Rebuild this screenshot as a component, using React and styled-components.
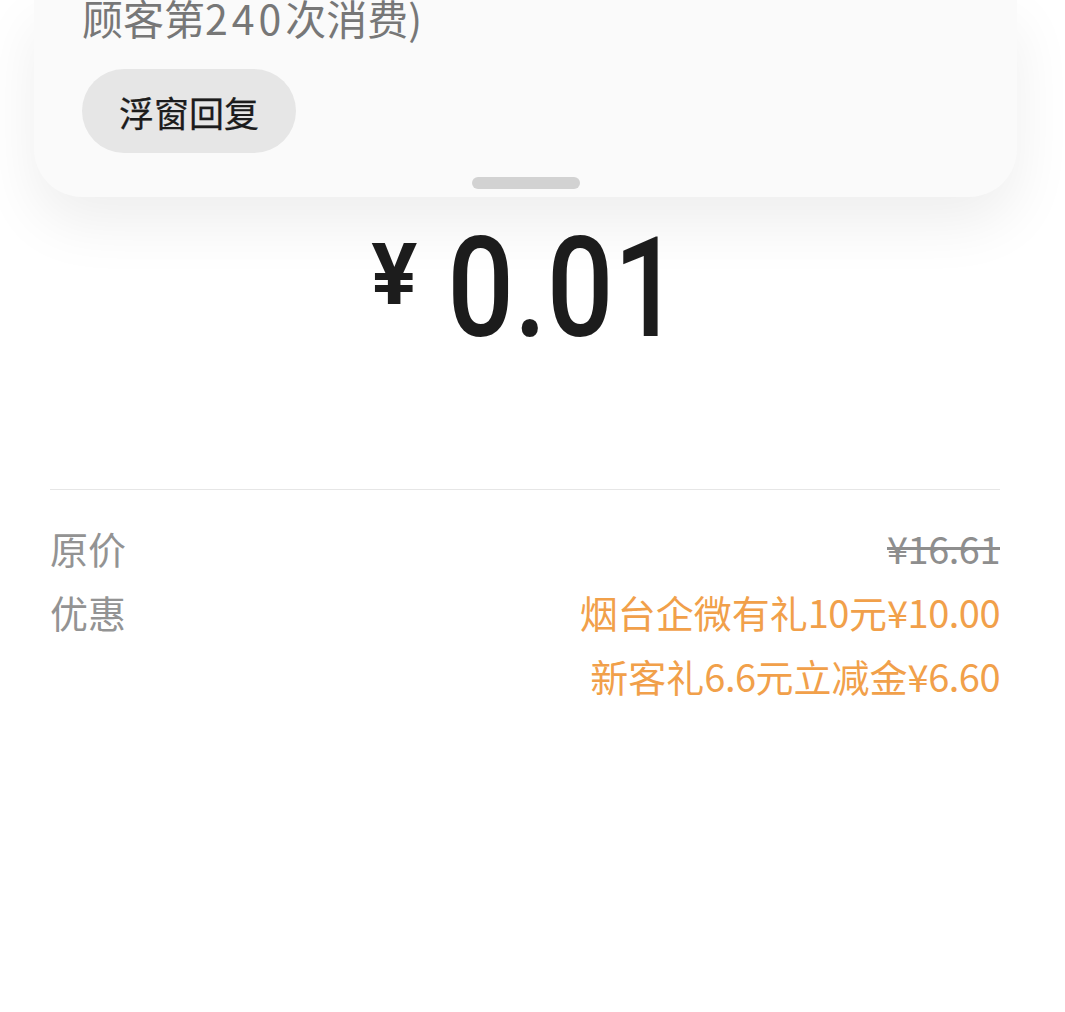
import React from "react";
import styled, {createGlobalStyle} from "styled-components";

const GlobalStyle = createGlobalStyle`
body {
    margin: 0;
    background: #fff;
    font-family: "Noto Sans CJK SC", "Noto Sans", sans-serif;
    overflow: hidden;
}
`;

const Page = styled.div`
width: 1065px;
height: 1012px;
display: flex;
flex-direction: column;
`;

const Card = styled.div`
display: flex;
flex-direction: column;
margin: 0 48px 0 34px;
padding: 0 48px 8px;
background: #fafafa;
border-radius: 0 0 48px 48px;
box-shadow: 0 26px 60px rgba(0, 0, 0, 0.07);
`;

const Note = styled.div`
margin-top: -7px;
font-size: 41px;
line-height: 48px;
color: #777;
`;

const Wide = styled.span`
letter-spacing: 4px;
`;

const ReplyButton = styled.button`
align-self: flex-start;
margin-top: 28px;
height: 84px;
padding: 0 37px;
border: none;
border-radius: 42px;
background: #e6e6e6;
color: #1c1c1c;
font-family: inherit;
font-size: 35px;
font-weight: 400;
-webkit-text-stroke: 0.25px #1c1c1c;
`;

const Handle = styled.div`
align-self: center;
margin-top: 24px;
width: 108px;
height: 12px;
border-radius: 6px;
background: #d2d2d2;
`;

const Price = styled.div`
display: flex;
justify-content: center;
align-items: flex-start;
margin: 21px 65px 0 50px;
color: #1c1c1c;
font-family: Roboto, "Noto Sans", sans-serif;
`;

const Yen = styled.span`
margin: 14px 6px 0 0;
font-size: 86px;
font-weight: 700;
line-height: 1;
`;

const Amount = styled.span`
display: inline-block;
margin-left: 2px;
margin-right: -24px;
font-size: 140px;
font-weight: 500;
line-height: 1;
transform: scaleX(0.84);
`;

const Divider = styled.div`
height: 1px;
margin: 131px 65px 0 50px;
background: #e6e6e6;
`;

const Details = styled.div`
display: flex;
flex-direction: column;
margin: 0 65px 0 50px;
padding-top: 26px;
font-size: 38px;
line-height: 64px;
`;

const Row = styled.div`
display: flex;
justify-content: space-between;
align-items: flex-start;
`;

const Label = styled.span`
color: #939393;
`;

const Values = styled.div`
display: flex;
flex-direction: column;
align-items: flex-end;
`;

const Value = styled.span`
color: ${p => p.$accent ? "#f1a04a" : "#8e8e8e"};
text-decoration: ${p => p.$struck ? "line-through" : "none"};
`;

const Num = styled.span`
letter-spacing: -0.5px;
`;

// wrap digit runs so they get the spacing of the reference font
const withNums = (text) => text.split(/([¥0-9.]+)/).map((part, i) =>
    /[0-9]/.test(part) ? <Num key={i}>{part}</Num> : part
);

const discounts = [
    "烟台企微有礼10元¥10.00",
    "新客礼6.6元立减金¥6.60",
];

export default function App() {
    return <Page>
        <GlobalStyle/>
        <Card>
            <Note>顾客第<Wide>240</Wide>次消费)</Note>
            <ReplyButton>浮窗回复</ReplyButton>
            <Handle/>
        </Card>
        <Price>
            <Yen>¥</Yen>
            <Amount>0.01</Amount>
        </Price>
        <Divider/>
        <Details>
            <Row>
                <Label>原价</Label>
                <Value $struck>{withNums("¥16.61")}</Value>
            </Row>
            <Row>
                <Label>优惠</Label>
                <Values>
                    {discounts.map(d => <Value key={d} $accent>{withNums(d)}</Value>)}
                </Values>
            </Row>
        </Details>
    </Page>;
}
